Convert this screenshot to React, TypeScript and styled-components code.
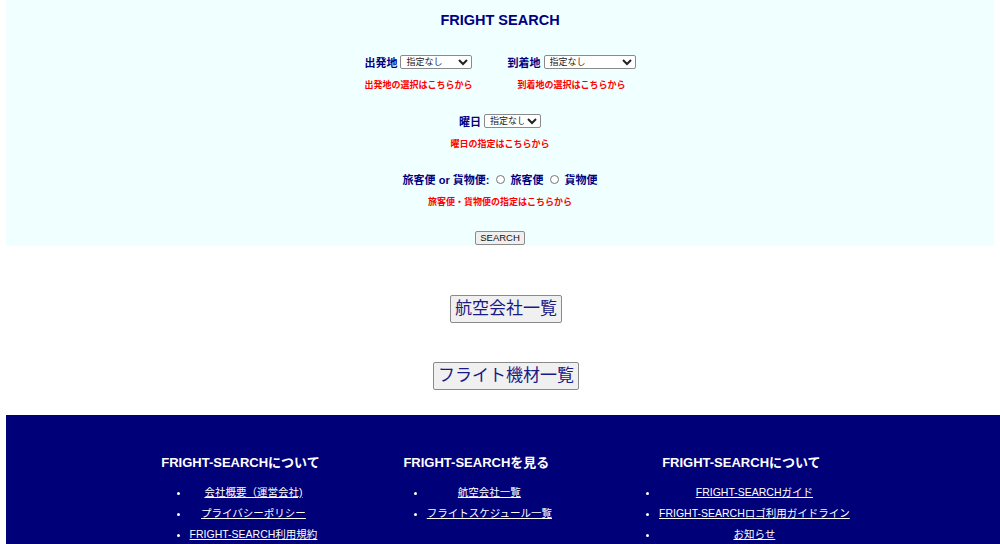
import styled, { createGlobalStyle } from 'styled-components';

const GlobalStyle = createGlobalStyle`
    html, body {
        margin: 0;
        padding: 0;
        background: #ffffff;
        font-family: 'Liberation Sans', 'Noto Sans CJK JP', sans-serif;
    }
`;

const NAVY = '#000080';

const SearchPanel = styled.section`
    margin: 0 6px;
    height: 246px;
    box-sizing: border-box;
    padding-top: 11px;
    background: #f0ffff;
    display: flex;
    flex-direction: column;
    align-items: center;
`;

const Title = styled.h1`
    margin: 0;
    font-size: 14.5px;
    line-height: 18px;
    font-weight: bold;
    color: ${NAVY};
`;

const FieldRow = styled.div<{ $top: number }>`
    display: flex;
    justify-content: center;
    gap: 35px;
    margin-top: ${(p) => p.$top}px;
`;

const Field = styled.div`
    display: flex;
    flex-direction: column;
    align-items: center;
`;

const Control = styled.div`
    display: flex;
    align-items: center;
    height: 16px;
    font-size: 11px;
    font-weight: bold;
    color: ${NAVY};
    white-space: nowrap;
`;

const Label = styled.label`
    margin-right: 3px;
`;

const Select = styled.select<{ $w: number }>`
    width: ${(p) => p.$w}px;
    height: 14px;
    box-sizing: border-box;
    padding: 0 0 0 1px;
    font-family: 'Liberation Sans', 'Noto Sans CJK JP', sans-serif;
    font-size: 9px;
    color: #222;
    background: #fff;
    border: 1px solid #8a8a8a;
    border-radius: 2px;
`;

const Radio = styled.input.attrs({ type: 'radio' })`
    width: 9px;
    height: 9px;
    margin: 0 5px 0 7px;
`;

const Note = styled.p`
    margin: 9px 0 0;
    font-size: 9px;
    line-height: 12px;
    font-weight: bold;
    color: #ff0000;
    white-space: nowrap;
`;

const SearchButton = styled.button`
    margin-top: 23px;
    width: 50px;
    height: 14px;
    padding: 0;
    font-family: 'Liberation Sans', sans-serif;
    font-size: 9.5px;
    line-height: 12px;
    color: #111;
    background: #efefef;
    border: 1px solid #8a8a8a;
    border-radius: 2px;
`;

const LinkButtons = styled.div`
    height: 169px;
    display: flex;
    flex-direction: column;
    align-items: center;
    padding: 49px 0 0 12px;
    box-sizing: border-box;
    gap: 39px;
`;

const BigButton = styled.button`
    height: 28px;
    padding: 0 4px;
    font-family: 'Liberation Sans', 'Noto Sans CJK JP', sans-serif;
    font-size: 17px;
    line-height: 20px;
    color: #1a1a86;
    background: #f0f0f0;
    border: 1px solid #8a8a8a;
    border-radius: 2px;
`;

const Footer = styled.footer`
    margin-left: 6px;
    height: 140px;
    box-sizing: border-box;
    padding: 40px 0 0 5px;
    background: #000078;
    display: flex;
    justify-content: center;
    gap: 81px;
`;

const FooterColumn = styled.div`
    display: flex;
    flex-direction: column;
    align-items: center;
`;

const FooterHeading = styled.h3`
    margin: 0;
    font-size: 13px;
    line-height: 16px;
    font-weight: bold;
    color: #ffffff;
    white-space: nowrap;
`;

const FooterList = styled.ul`
    margin: 11px 0 0 14px;
    padding: 0 0 0 12px;
    list-style: disc outside;
    color: #ffffff;
    font-size: 10.5px;
`;

const FooterItem = styled.li`
    text-align: center;
    line-height: 21px;
    white-space: nowrap;
`;

const FooterLink = styled.a`
    color: #ffffff;
    text-decoration: underline;
`;

const footerColumns = [
    {
        title: 'FRIGHT-SEARCHについて',
        links: ['会社概要（運営会社)', 'プライバシーポリシー', 'FRIGHT-SEARCH利用規約'],
    },
    {
        title: 'FRIGHT-SEARCHを見る',
        links: ['航空会社一覧', 'フライトスケジュール一覧'],
    },
    {
        title: 'FRIGHT-SEARCHについて',
        links: ['FRIGHT-SEARCHガイド', 'FRIGHT-SEARCHロゴ利用ガイドライン', 'お知らせ'],
    },
];

const App = () => {
    return (
        <>
            <GlobalStyle />
            <SearchPanel>
                <Title>FRIGHT SEARCH</Title>
                <FieldRow $top={25}>
                    <Field>
                        <Control>
                            <Label>出発地</Label>
                            <Select $w={72}>
                                <option>指定なし</option>
                            </Select>
                        </Control>
                        <Note>出発地の選択はこちらから</Note>
                    </Field>
                    <Field>
                        <Control>
                            <Label>到着地</Label>
                            <Select $w={92}>
                                <option>指定なし</option>
                            </Select>
                        </Control>
                        <Note>到着地の選択はこちらから</Note>
                    </Field>
                </FieldRow>
                <FieldRow $top={22}>
                    <Field>
                        <Control>
                            <Label>曜日</Label>
                            <Select $w={57}>
                                <option>指定なし</option>
                            </Select>
                        </Control>
                        <Note>曜日の指定はこちらから</Note>
                    </Field>
                </FieldRow>
                <FieldRow $top={21}>
                    <Field>
                        <Control>
                            <span>旅客便 or 貨物便:</span>
                            <Radio name="kind" />
                            <span>旅客便</span>
                            <Radio name="kind" />
                            <span>貨物便</span>
                        </Control>
                        <Note>旅客便・貨物便の指定はこちらから</Note>
                    </Field>
                </FieldRow>
                <SearchButton>SEARCH</SearchButton>
            </SearchPanel>
            <LinkButtons>
                <BigButton>航空会社一覧</BigButton>
                <BigButton>フライト機材一覧</BigButton>
            </LinkButtons>
            <Footer>
                {footerColumns.map((col, i) => (
                    <FooterColumn key={i}>
                        <FooterHeading>{col.title}</FooterHeading>
                        <FooterList>
                            {col.links.map((link) => (
                                <FooterItem key={link}>
                                    <FooterLink href="#">{link}</FooterLink>
                                </FooterItem>
                            ))}
                        </FooterList>
                    </FooterColumn>
                ))}
            </Footer>
        </>
    );
};

export default App;
